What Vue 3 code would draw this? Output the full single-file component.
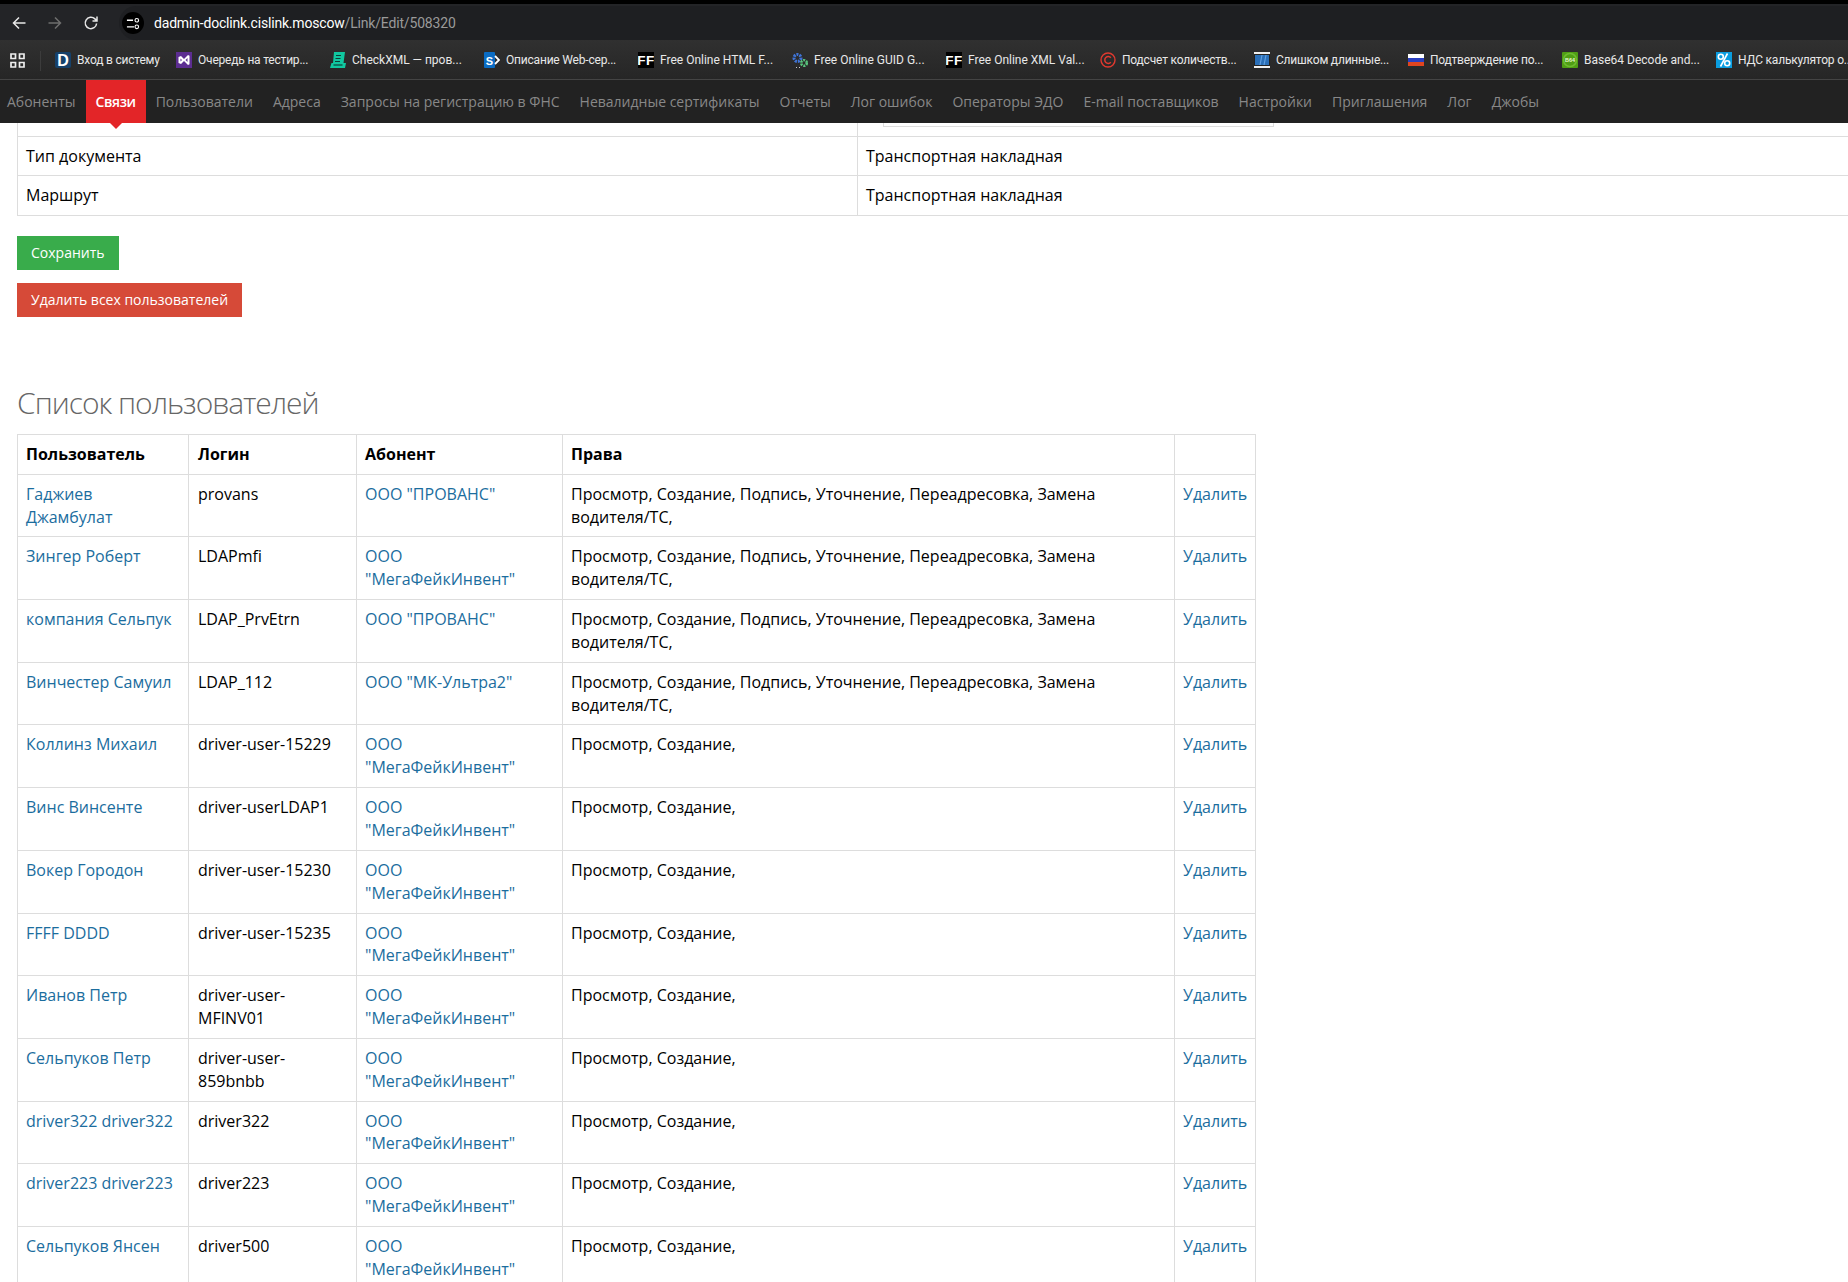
<script setup>
const navItems = [
  'Абоненты', 'Связи', 'Пользователи', 'Адреса', 'Запросы на регистрацию в ФНС',
  'Невалидные сертификаты', 'Отчеты', 'Лог ошибок', 'Операторы ЭДО',
  'E-mail поставщиков', 'Настройки', 'Приглашения', 'Лог', 'Джобы',
]

const bookmarks = [
  { icon: 'd', label: 'Вход в систему' },
  { icon: 'vs', label: 'Очередь на тестир...' },
  { icon: 'xml', label: 'CheckXML — пров...' },
  { icon: 'sp', label: 'Описание Web-сер...' },
  { icon: 'ff', label: 'Free Online HTML F...' },
  { icon: 'gear', label: 'Free Online GUID G...' },
  { icon: 'ff', label: 'Free Online XML Val...' },
  { icon: 'copy', label: 'Подсчет количеств...' },
  { icon: 'win', label: 'Слишком длинные...' },
  { icon: 'flag', label: 'Подтверждение по...' },
  { icon: 'b64', label: 'Base64 Decode and...' },
  { icon: 'pct', label: 'НДС калькулятор о...' },
]

const isCyrillic = (text) => /^[^a-z]*[а-я]/i.test(text)

const fullRights = 'Просмотр, Создание, Подпись, Уточнение, Переадресовка, Замена водителя/ТС,'
const shortRights = 'Просмотр, Создание,'
const mega = 'ООО "МегаФейкИнвент"'

const users = [
  { name: 'Гаджиев Джамбулат', login: 'provans', org: 'ООО "ПРОВАНС"', rights: fullRights },
  { name: 'Зингер Роберт', login: 'LDAPmfi', org: mega, rights: fullRights },
  { name: 'компания Сельпук', login: 'LDAP_PrvEtrn', org: 'ООО "ПРОВАНС"', rights: fullRights },
  { name: 'Винчестер Самуил', login: 'LDAP_112', org: 'ООО "МК-Ультра2"', rights: fullRights },
  { name: 'Коллинз Михаил', login: 'driver-user-15229', org: mega, rights: shortRights },
  { name: 'Винс Винсенте', login: 'driver-userLDAP1', org: mega, rights: shortRights },
  { name: 'Вокер Городон', login: 'driver-user-15230', org: mega, rights: shortRights },
  { name: 'FFFF DDDD', login: 'driver-user-15235', org: mega, rights: shortRights },
  { name: 'Иванов Петр', login: 'driver-user-MFINV01', org: mega, rights: shortRights },
  { name: 'Сельпуков Петр', login: 'driver-user-859bnbb', org: mega, rights: shortRights },
  { name: 'driver322 driver322', login: 'driver322', org: mega, rights: shortRights },
  { name: 'driver223 driver223', login: 'driver223', org: mega, rights: shortRights },
  { name: 'Сельпуков Янсен', login: 'driver500', org: mega, rights: shortRights },
]
</script>

<template>
  <div class="page">
    <div class="browser">
      <div class="toolbar">
        <svg class="tool" viewBox="0 0 16 16"><path d="M14.5 8H2.5M8 2.5 2.5 8 8 13.5" fill="none" stroke="#e8e8e8" stroke-width="1.5" /></svg>
        <svg class="tool" viewBox="0 0 16 16"><path d="M1.5 8h12M8 2.5 13.5 8 8 13.5" fill="none" stroke="#6e6e6e" stroke-width="1.5" /></svg>
        <svg class="tool" viewBox="0 0 16 16"><path d="M13.6 8.5a5.7 5.7 0 1 1-1.7-4.6L14 6M14 1.5V6H9.5" fill="none" stroke="#e8e8e8" stroke-width="1.5" /></svg>
        <div class="address">
          <span class="site-info">
            <svg viewBox="0 0 16 16" width="15" height="15"><path d="M1 4.500h6.500M8.500 11.500H1" stroke="#fff" stroke-width="1.400" /><circle cx="11.500" cy="4.500" r="1.900" fill="none" stroke="#fff" stroke-width="1.200" /><circle cx="11.500" cy="11.500" r="1.900" fill="none" stroke="#fff" stroke-width="1.200" /></svg>
          </span>
          <span class="url">dadmin-doclink.cislink.moscow<span class="url-path">/Link/Edit/508320</span></span>
        </div>
      </div>
      <div class="bookmarks">
        <svg class="apps" viewBox="0 0 15 15"><path d="M1 1h4.500v4.500H1zM9.500 1H14v4.500H9.500zM1 9.500h4.500V14H1zM9.500 9.500H14V14H9.500z" fill="none" stroke="#eee" stroke-width="1.700" /></svg>
        <span class="bm-sep"></span>
        <div v-for="(b, i) in bookmarks" :key="i" class="bookmark" :class="{ first: i === 0 }">
          <svg class="bm-icon" viewBox="0 0 16 16">
            <template v-if="b.icon === 'd'">
              <rect width="16" height="16" rx="2" fill="#16416a" />
              <text x="8" y="14" text-anchor="middle" font-size="16" font-weight="700" fill="#fff" font-family="Liberation Sans">D</text>
            </template>
            <template v-else-if="b.icon === 'vs'">
              <rect width="16" height="16" fill="#5c2d91" />
              <path d="M2.500 5 5 4l3 3 4-4 1.500 .7v8.600L12 13 8 9l-3 3-2.500-1zM4.500 6.500v3L6 8zM11.500 6 9.500 8l2 2z" fill="#fff" fill-rule="evenodd" />
            </template>
            <template v-else-if="b.icon === 'xml'">
              <path d="M4 0h11l-1.500 11 2.500 0-1 5H0l1.500-5H3z" fill="#10c8a0" />
              <path d="M6 3.500h5M5.500 6.500h5M5 9.500h5" stroke="#0d3f38" stroke-width="1.200" />
              <path d="M3.500 13h9" stroke="#0d3f38" stroke-width="1.200" />
            </template>
            <template v-else-if="b.icon === 'sp'">
              <rect y="0" width="11" height="16" rx="1" fill="#0a6cc4" />
              <text x="5.500" y="12.500" text-anchor="middle" font-size="11" font-weight="700" fill="#fff" font-family="Liberation Sans">S</text>
              <path d="M11 4l4 4-4 4" fill="none" stroke="#fff" stroke-width="1.800" />
            </template>
            <template v-else-if="b.icon === 'ff'">
              <rect width="16" height="16" fill="#000" />
              <text x="8" y="12.500" text-anchor="middle" font-size="13.500" font-weight="700" fill="#fff" font-family="Liberation Sans" letter-spacing="0.400">FF</text>
            </template>
            <template v-else-if="b.icon === 'gear'">
              <circle cx="5.500" cy="6" r="3.500" fill="none" stroke="#3f74d8" stroke-width="3" stroke-dasharray="2 1" />
              <circle cx="12" cy="11" r="2.800" fill="none" stroke="#58c47c" stroke-width="2.600" stroke-dasharray="2 1" />
              <path d="M4 15.500h1M7 15.500h1" stroke="#ccc" stroke-width="1" />
            </template>
            <template v-else-if="b.icon === 'copy'">
              <circle cx="8" cy="8" r="7" fill="none" stroke="#e0392f" stroke-width="1.400" />
              <path d="M10.800 5.800a3.400 3.400 0 1 0 0 4.400" fill="none" stroke="#e0392f" stroke-width="1.500" />
            </template>
            <template v-else-if="b.icon === 'win'">
              <rect width="16" height="16" fill="#f0f0f0" />
              <rect y="2" width="16" height="12" fill="#222" />
              <rect x="1" y="3" width="14" height="10" fill="#2a6fb8" />
              <path d="M8 3 6 13M12 3l-2 10" stroke="#5f9fe0" stroke-width="1.200" />
            </template>
            <template v-else-if="b.icon === 'flag'">
              <rect y="2" width="16" height="4" fill="#fff" />
              <rect y="6" width="16" height="4" fill="#2a3fc0" />
              <rect y="10" width="16" height="4" fill="#e0451f" />
            </template>
            <template v-else-if="b.icon === 'b64'">
              <rect width="16" height="16" rx="1" fill="#4f9e14" />
              <circle cx="8" cy="8" r="6.500" fill="none" stroke="#6dbb30" stroke-width="1.500" />
              <text x="8" y="10" text-anchor="middle" font-size="5.500" font-weight="700" fill="#e6f7d2" font-family="Liberation Sans">B64</text>
            </template>
            <template v-else>
              <rect width="16" height="16" fill="#0a9de0" />
              <circle cx="4.800" cy="4.800" r="2.500" fill="none" stroke="#fff" stroke-width="1.600" />
              <circle cx="11.200" cy="11.200" r="2.500" fill="none" stroke="#fff" stroke-width="1.600" />
              <path d="M11.500 1.500 4.500 14.500" stroke="#fff" stroke-width="1.600" />
            </template>
          </svg>
          <span class="bm-text" :class="{ cyr: isCyrillic(b.label) }">{{ b.label }}</span>
        </div>
      </div>
    </div>

    <nav class="nav">
      <a v-for="item in navItems" :key="item" class="nav-item" :class="{ active: item === 'Связи' }">{{ item }}</a>
    </nav>

    <main class="content">
      <table class="table settings">
        <tbody>
          <tr class="cut-row">
            <td></td>
            <td><div class="cut-input"></div></td>
          </tr>
          <tr class="doc-row">
            <td>Тип документа</td>
            <td>Транспортная накладная</td>
          </tr>
          <tr>
            <td>Маршрут</td>
            <td>Транспортная накладная</td>
          </tr>
        </tbody>
      </table>

      <button class="btn green">Сохранить</button>
      <button class="btn red">Удалить всех пользователей</button>

      <h2 class="title">Список пользователей</h2>

      <table class="table users">
        <colgroup>
          <col class="col-user" />
          <col class="col-login" />
          <col class="col-org" />
          <col class="col-rights" />
          <col class="col-del" />
        </colgroup>
        <thead>
          <tr>
            <th>Пользователь</th>
            <th class="login">Логин</th>
            <th>Абонент</th>
            <th>Права</th>
            <th></th>
          </tr>
        </thead>
        <tbody>
          <tr v-for="u in users" :key="u.login">
            <td><a class="link">{{ u.name }}</a></td>
            <td class="login">{{ u.login }}</td>
            <td><a class="link">{{ u.org }}</a></td>
            <td>{{ u.rights }}</td>
            <td><a class="link">Удалить</a></td>
          </tr>
        </tbody>
      </table>
    </main>
  </div>
</template>

<style scoped>
.page {
  width: 1848px;
  height: 1282px;
  overflow: hidden;
  background: #fff;
  font-family: "Open Sans", "Noto Sans", sans-serif;
  font-size: 16px;
  line-height: 1.42857;
  color: #000;
}

.browser {
  background: #000;
  padding-top: 4px;
}

.toolbar {
  height: 36px;
  box-sizing: border-box;
  padding: 2px 0 0 11px;
  display: flex;
  align-items: center;
  background: #232427;
  gap: 20px;
}

.tool {
  width: 16px;
  height: 16px;
  flex: none;
}

.address {
  display: flex;
  align-items: center;
  gap: 10px;
  height: 34px;
  flex: 1;
  min-width: 0;
  background: #1e1f22;
  border-radius: 17px 0 0 17px;
  padding-left: 3px;
}

.site-info {
  width: 22px;
  height: 22px;
  border-radius: 50%;
  background: #000;
  display: flex;
  align-items: center;
  justify-content: center;
  flex: none;
}

.url {
  font-family: Roboto, "Open Sans", sans-serif;
  font-size: 14px;
  letter-spacing: -0.18px;
  color: #fff;
  white-space: nowrap;
  margin-top: 2px;
}

.url-path {
  color: #9a9a9a;
}

.bookmarks {
  height: 40px;
  display: flex;
  align-items: center;
  background: linear-gradient(#303030, #262626);
  border-bottom: 1px solid #444;
  padding: 2px 0 0 10px;
  overflow: hidden;
  box-sizing: border-box;
}

.apps {
  width: 15px;
  height: 15px;
  flex: none;
}

.bm-sep {
  width: 1px;
  height: 20px;
  background: #3c3c3c;
  margin: 0 14px 0 15px;
  flex: none;
}

.bookmark {
  width: 154px;
  flex: none;
  display: flex;
  align-items: center;
  gap: 6px;
  white-space: nowrap;
}

.bookmark.first {
  width: 121px;
}

.bm-icon {
  width: 16px;
  height: 16px;
  flex: none;
}

.bm-text {
  font-family: Roboto, "Open Sans", sans-serif;
  font-size: 12px;
  color: #e8e8e8;
}

.bm-text.cyr {
  letter-spacing: -0.2px;
}

.nav {
  height: 43px;
  display: flex;
  align-items: stretch;
  background: #222;
  padding-left: 7px;
  position: relative;
  z-index: 2;
  font-size: 14px;
}

.nav-item {
  display: flex;
  align-items: center;
  padding: 0 10px;
  color: #888;
  white-space: nowrap;
  position: relative;
}

.nav-item:first-child {
  padding-left: 0;
}

.nav-item.active {
  background: #e32528;
  color: #fff;
  font-weight: 600;
  letter-spacing: -0.4px;
}

.nav-item.active::after {
  content: "";
  position: absolute;
  left: 50%;
  top: 100%;
  margin-left: -6px;
  border: 6px solid transparent;
  border-top-color: #e32528;
  border-bottom: 0;
}

.content {
  padding-left: 17px;
}

.table {
  border-collapse: collapse;
  table-layout: fixed;
}

.table td,
.table th {
  border: 1px solid #ddd;
  padding: 8px;
  vertical-align: top;
  text-align: left;
}

.settings {
  width: 1900px;
  margin-bottom: 20px;
}

.settings td:first-child {
  width: 839px;
}

.settings .cut-row td {
  padding: 0;
  border-top: 0;
  height: 13px;
}

.settings .doc-row td {
  line-height: 22px;
}

.cut-input {
  margin-left: 25px;
  width: 391px;
  height: 4px;
  box-sizing: border-box;
  border: 1px solid #ddd;
  border-top: 0;
}

.btn {
  display: block;
  border: 0;
  height: 34px;
  padding: 0 14px;
  font-family: inherit;
  font-size: 14px;
  color: #fff;
  margin-bottom: 13px;
}

.green {
  background: #39ac4b;
}

.red {
  background: #d64a38;
}

.title {
  font-family: "Open Sans Light", "Open Sans", sans-serif;
  font-size: 30px;
  font-weight: 300;
  line-height: 33px;
  letter-spacing: -1px;
  color: #666;
  margin: 69px 0 15px;
}

.users {
  width: 1238px;
}

.col-user {
  width: 171px;
}

.col-login {
  width: 168px;
}

.col-org {
  width: 206px;
}

.col-rights {
  width: 612px;
}

.col-del {
  width: 81px;
}

.table .login {
  padding-left: 9px;
}

.link {
  color: #1b6d9e;
}
</style>

<style>
body {
  overflow: hidden;
}
</style>
